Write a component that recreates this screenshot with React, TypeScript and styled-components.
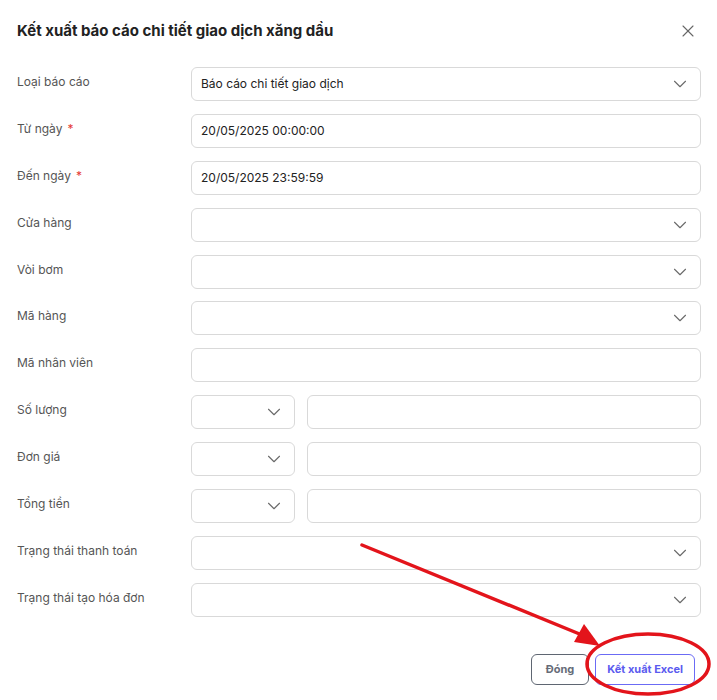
import styled, { createGlobalStyle } from "styled-components";
import { ChevronDown, X } from "lucide-react";

const GlobalStyle = createGlobalStyle`
  body {
    margin: 0;
    background: #fff;
    font-family: Inter, "Noto Sans", "Liberation Sans", sans-serif;
  }
`;

const Modal = styled.div`
  position: relative;
  width: 717px;
  height: 700px;
  background: #fff;
  box-sizing: border-box;
  padding: 20px 16px 0 17px;
`;

const Header = styled.div`
  display: flex;
  align-items: center;
  justify-content: space-between;
  height: 22px;
`;

const Title = styled.h1`
  margin: 0;
  font-size: 15px;
  font-weight: 700;
  color: #222;
  line-height: 22px;
`;

const CloseButton = styled.button`
  border: none;
  background: none;
  padding: 0;
  margin-right: 3px;
  display: flex;
  color: #666;
  cursor: pointer;
`;

const Form = styled.form`
  display: grid;
  grid-template-columns: 174px 1fr;
  row-gap: 12.9px;
  margin-top: 25px;
`;

const Label = styled.label`
  font-size: 12px;
  line-height: 20px;
  color: #555;
  padding-top: 5px;
`;

const Required = styled.span`
  color: #e53935;
  margin-left: 5px;
`;

const Field = styled.div`
  display: flex;
  gap: 12px;
`;

const Box = styled.div<{ $w?: number }>`
  height: 34px;
  box-sizing: border-box;
  border: 1px solid #d9d9d9;
  border-radius: 6px;
  display: flex;
  align-items: center;
  padding: 0 9px 0 9px;
  font-size: 12px;
  color: #222;
  background: #fff;
  ${(p) => (p.$w ? `width: ${p.$w}px; flex: none;` : "flex: 1;")}
`;

const Value = styled.span`
  flex: 1;
  margin-top: -1px;
`;

const Footer = styled.div`
  display: flex;
  justify-content: flex-end;
  gap: 6px;
  margin-top: 37px;
  padding-right: 6px;
`;

const Button = styled.button<{ $primary?: boolean }>`
  height: 31px;
  box-sizing: border-box;
  border-radius: 6px;
  background: #fff;
  font-family: inherit;
  font-size: 11px;
  font-weight: 700;
  padding: 0 ${(p) => (p.$primary ? 11 : 14)}px;
  border: 1px solid ${(p) => (p.$primary ? "#6b6bf5" : "#5f6672")};
  color: ${(p) => (p.$primary ? "#5b5bef" : "#666c78")};
  cursor: pointer;
`;

const Annotation = styled.svg`
  position: absolute;
  left: 0;
  top: 0;
  pointer-events: none;
`;

type Row = {
  label: string;
  required?: boolean;
  kind: "select" | "input" | "pair";
  value?: string;
};

const rows: Row[] = [
  { label: "Loại báo cáo", kind: "select", value: "Báo cáo chi tiết giao dịch" },
  { label: "Từ ngày", required: true, kind: "input", value: "20/05/2025 00:00:00" },
  { label: "Đến ngày", required: true, kind: "input", value: "20/05/2025 23:59:59" },
  { label: "Cửa hàng", kind: "select" },
  { label: "Vòi bơm", kind: "select" },
  { label: "Mã hàng", kind: "select" },
  { label: "Mã nhân viên", kind: "input" },
  { label: "Số lượng", kind: "pair" },
  { label: "Đơn giá", kind: "pair" },
  { label: "Tổng tiền", kind: "pair" },
  { label: "Trạng thái thanh toán", kind: "select" },
  { label: "Trạng thái tạo hóa đơn", kind: "select" },
];

const Chevron = () => <ChevronDown size={22} strokeWidth={1.2} color="#6a6a6a" />;

const App = () => {
  return (
    <>
      <GlobalStyle />
      <Modal>
        <Header>
          <Title>Kết xuất báo cáo chi tiết giao dịch xăng dầu</Title>
          <CloseButton>
            <X size={20} strokeWidth={1.3} />
          </CloseButton>
        </Header>
        <Form>
          {rows.map((r) => (
            <>
              <Label key={r.label + "-l"}>
                {r.label}
                {r.required && <Required>*</Required>}
              </Label>
              <Field key={r.label + "-f"}>
                {r.kind === "pair" ? (
                  <>
                    <Box $w={104}>
                      <Value />
                      <Chevron />
                    </Box>
                    <Box />
                  </>
                ) : (
                  <Box>
                    <Value>{r.value}</Value>
                    {r.kind === "select" && <Chevron />}
                  </Box>
                )}
              </Field>
            </>
          ))}
        </Form>
        <Footer>
          <Button>Đóng</Button>
          <Button $primary>Kết xuất Excel</Button>
        </Footer>
        <Annotation width="717" height="700">
          <line x1="362" y1="545" x2="582" y2="635" stroke="#e3141b" strokeWidth="3.5" strokeLinecap="round" />
          <polygon points="600,646 574,642 584,624" fill="#e3141b" />
          <ellipse cx="648" cy="664" rx="61" ry="30" fill="none" stroke="#e3141b" strokeWidth="3.5" />
        </Annotation>
      </Modal>
    </>
  );
};

export default App;
